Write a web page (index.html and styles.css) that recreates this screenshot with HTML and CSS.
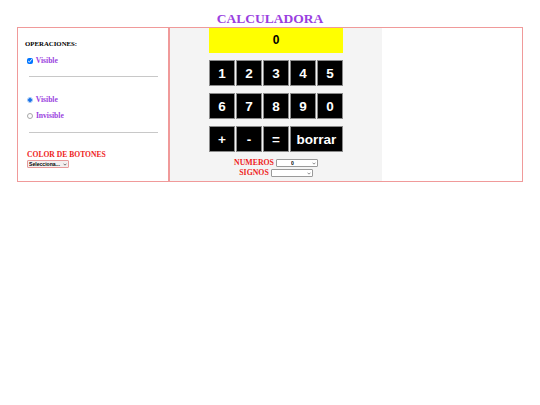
FILE: index.html
```html
<!DOCTYPE html>
<html lang="es">
<head>
<meta charset="utf-8">
<title>Calculadora</title>
<link rel="stylesheet" href="styles.css">
</head>
<body>
<h1 class="title">CALCULADORA</h1>
<div class="layout">
  <div class="panel">
    <div class="op-title">OPERACIONES:</div>
    <label class="opt"><input type="checkbox" checked> Visible</label>
    <hr class="rule">
    <label class="opt opt-r1"><input class="radio" type="radio" name="vis" checked> Visible</label>
    <label class="opt opt-r2"><input class="radio" type="radio" name="vis"> Invisible</label>
    <hr class="rule rule2">
    <div class="color-title">COLOR DE BOTONES</div>
    <span class="sel-wrap color-wrap">
      <select class="sel color-sel"><option>Selecciona...</option></select>
      <svg class="chev" viewBox="0 0 6 4" width="4" height="3"><path d="M0.8 0.8 L3 3 L5.2 0.8" fill="none" stroke="#333" stroke-width="1"/></svg>
    </span>
  </div>
  <div class="main">
    <div class="calc">
      <div class="display">0</div>
      <div class="keys">
        <button class="key">1</button><button class="key">2</button><button class="key">3</button><button class="key">4</button><button class="key">5</button>
      </div>
      <div class="keys">
        <button class="key">6</button><button class="key">7</button><button class="key">8</button><button class="key">9</button><button class="key">0</button>
      </div>
      <div class="keys">
        <button class="key">+</button><button class="key">-</button><button class="key">=</button><button class="key key-wide">borrar</button>
      </div>
      <div class="sel-row sel-row1"><span class="sel-label">NUMEROS</span><span class="sel-wrap"><select class="sel mini-sel num-sel"><option>0</option></select><svg class="chev" viewBox="0 0 6 4" width="4" height="3"><path d="M0.8 0.8 L3 3 L5.2 0.8" fill="none" stroke="#555" stroke-width="1"/></svg></span></div>
      <div class="sel-row"><span class="sel-label">SIGNOS</span><span class="sel-wrap"><select class="sel mini-sel"><option></option></select><svg class="chev" viewBox="0 0 6 4" width="4" height="3"><path d="M0.8 0.8 L3 3 L5.2 0.8" fill="none" stroke="#555" stroke-width="1"/></svg></span></div>
    </div>
  </div>
</div>
</body>
</html>
```

FILE: styles.css
```css
html, body {
  margin: 0;
  padding: 0;
  background: #ffffff;
}
body {
  padding-top: 11px;
  font-family: "Liberation Serif", "Times New Roman", serif;
}
.title {
  margin: 0;
  height: 16px;
  line-height: 16px;
  font-size: 13.5px;
  font-weight: bold;
  text-align: center;
  color: #9a3fe0;
}
.layout {
  display: flex;
  margin-left: 17px;
  width: 506px;
  height: 155px;
}
.panel {
  box-sizing: border-box;
  width: 152px;
  height: 155px;
  border: 1px solid #f09a9a;
  padding: 11px 0 0 7px;
}
.op-title {
  height: 10px;
  line-height: 10px;
  font-size: 6.8px;
  font-weight: bold;
  color: #000;
}
.opt {
  display: flex;
  align-items: center;
  height: 10px;
  line-height: 10px;
  margin: 7px 0 0 2px;
  font-size: 7.6px;
  font-weight: bold;
  color: #9a3fe0;
  white-space: pre;
}
.opt input {
  width: 6px;
  height: 6px;
  margin: 0 1px 0 0;
}
.opt .radio {
  appearance: none;
  -webkit-appearance: none;
  box-sizing: border-box;
  width: 6px;
  height: 6px;
  border-radius: 50%;
  border: 1px solid #a8a8a8;
  background: #fff;
}
.opt .radio:checked {
  border: 1px solid #9cc4f5;
  background: radial-gradient(circle, #1a73e8 0, #1a73e8 1.6px, #c9defa 2.2px);
}
.opt-r1 { margin-top: 18px; }
.opt-r2 { margin-top: 6px; }
.rule {
  border: 0;
  border-top: 1px solid #c8c8c8;
  height: 0;
  margin: 10px 10px 0 4px;
}
.rule2 { margin-top: 11px; }
.color-title {
  margin: 17px 0 0 2px;
  height: 10px;
  line-height: 10px;
  font-size: 7.6px;
  font-weight: bold;
  color: #ee1c1c;
}
.sel-wrap {
  position: relative;
  display: inline-block;
  line-height: 0;
}
.color-wrap {
  display: block;
  width: 42px;
  margin-left: 2px;
}
.sel {
  appearance: none;
  -webkit-appearance: none;
  box-sizing: border-box;
  display: block;
  width: 42px;
  height: 8px;
  padding: 0 0 0 1px;
  margin: 0;
  font-family: "Liberation Sans", Arial, sans-serif;
  font-size: 5.1px;
  font-weight: bold;
  line-height: 6px;
  color: #000;
  border-radius: 1px;
}
.color-sel {
  border: 1px solid #e89a9a;
  background: #f3eeee;
}
.chev {
  position: absolute;
  right: 2px;
  top: 2.5px;
  pointer-events: none;
}
.main {
  box-sizing: border-box;
  flex: 1;
  height: 155px;
  border: 1px solid #f09a9a;
  display: flex;
}
.calc {
  width: 212px;
  background: #f4f4f4;
  display: flex;
  flex-direction: column;
  align-items: center;
}
.display {
  width: 134px;
  height: 25px;
  line-height: 25px;
  background: #ffff00;
  text-align: center;
  font-family: "Liberation Sans", Arial, sans-serif;
  font-weight: bold;
  font-size: 12px;
  color: #000;
}
.keys {
  display: flex;
  gap: 1px;
  width: 134px;
  margin-top: 7px;
}
.keys:first-of-type { margin-top: 8px; }
.key {
  box-sizing: border-box;
  width: 26px;
  height: 26px;
  padding: 0;
  margin: 0;
  background: #000;
  border: 1px solid #8a8a8a;
  color: #fff;
  font-family: "Liberation Sans", Arial, sans-serif;
  font-weight: bold;
  font-size: 13.5px;
}
.key-wide { width: 53px; }
.sel-row {
  display: flex;
  align-items: center;
  justify-content: center;
  height: 10px;
  gap: 2px;
}
.sel-row1 { margin-top: 6px; }
.sel-label {
  font-size: 7.8px;
  font-weight: bold;
  color: #ee1c1c;
  line-height: 10px;
}
.mini-sel {
  border: 1px solid #9a9a9a;
  background: #fff;
  padding-left: 14px;
}
```
